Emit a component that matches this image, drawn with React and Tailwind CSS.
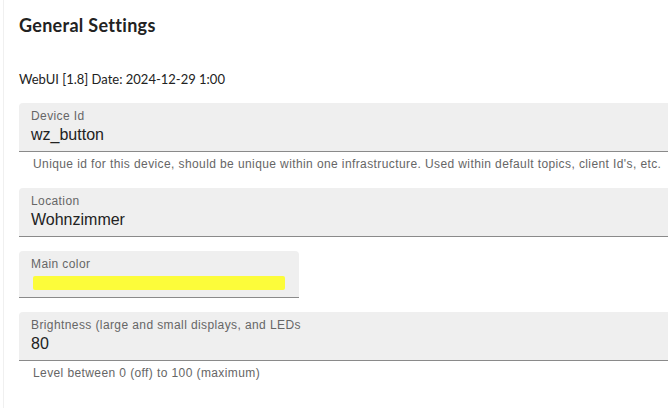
export default function App() {
  return (
    <div className="w-[668px] h-[408px] overflow-hidden bg-white">
      <div className="ml-[3px] h-full border-l border-[#f0f0f0] pl-[15px]">
        <h1 className="pt-[13px] text-[18px] font-bold leading-[24px] tracking-[0.3px] text-[#222] [font-family:Lato,sans-serif]">
          General Settings
        </h1>
        <p className="mt-[33px] text-[13px] leading-[18px] text-[#222] [font-family:Lato,sans-serif]">
          WebUI [1.8] Date: 2024-12-29 1:00
        </p>

        <div className="mt-[15px] flex flex-col [font-family:'Liberation_Sans',Arial,sans-serif]">
          <Field label="Device Id" value="wz_button" />
          <Helper>Unique id for this device, should be unique within one infrastructure. Used within default topics, client Id's, etc.</Helper>

          <div className="mt-[17px]">
            <Field label="Location" value="Wohnzimmer" />
          </div>

          <div className="mt-[14px] w-[280px] rounded-t-[4px] border-b border-[#8a8a8a] bg-[#efefef] px-[12px] pt-[6px] pb-[7px]">
            <div className="text-[12px] leading-[14px] tracking-[0.4px] text-[#666]">Main color</div>
            <div className="mt-[5px] ml-[2px] h-[14px] w-[252px] rounded-[2px] bg-[#fcfc3a]" />
          </div>

          <div className="mt-[14px]">
            <Field label="Brightness (large and small displays, and LEDs" value="80" />
          </div>
          <Helper>Level between 0 (off) to 100 (maximum)</Helper>
        </div>
      </div>
    </div>
  );
}

function Field({ label, value }) {
  return (
    <div className="w-[700px] rounded-t-[4px] border-b border-[#8a8a8a] bg-[#efefef] px-[12px] pt-[6px] pb-[6px]">
      <div className="text-[12px] leading-[14px] tracking-[0.4px] text-[#666]">{label}</div>
      <div className="mt-[2px] text-[16px] leading-[20px] text-[#222]">{value}</div>
    </div>
  );
}

function Helper({ children }) {
  return (
    <p className="mt-[5px] pl-[14px] text-[12px] leading-[14px] tracking-[0.4px] text-[#666] whitespace-nowrap">{children}</p>
  );
}
